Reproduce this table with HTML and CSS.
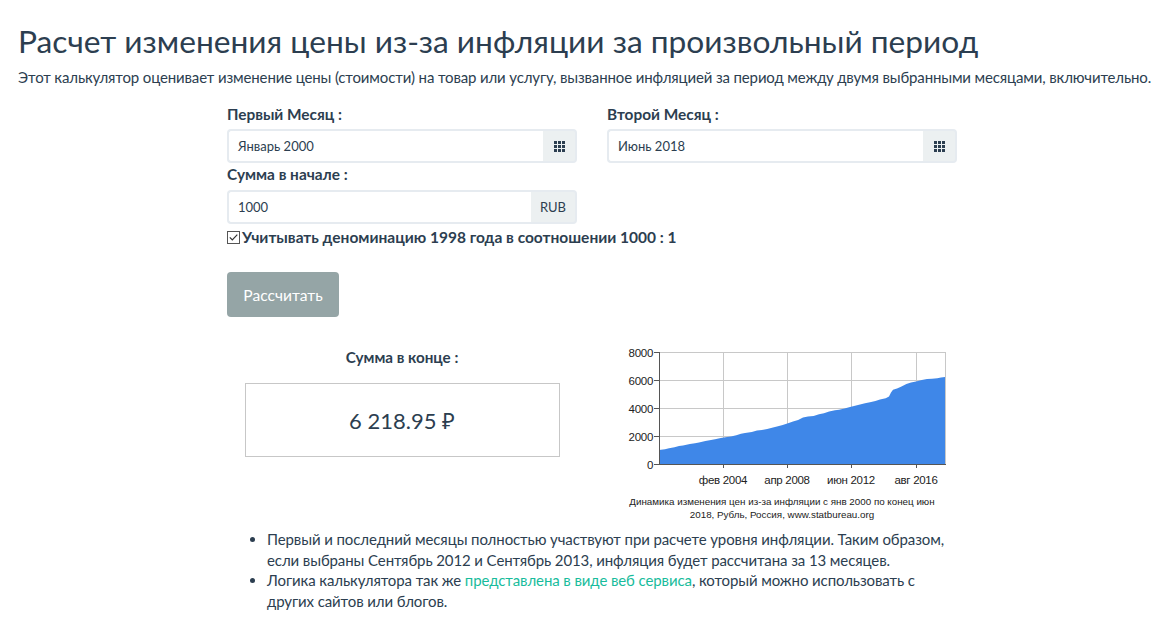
FILE: index.html
```html
<!DOCTYPE html>
<html lang="ru">
<head>
<meta charset="utf-8">
<title>Расчет изменения цены из-за инфляции</title>
<link rel="stylesheet" href="styles.css">
</head>
<body>
<h1 class="title">Расчет изменения цены из-за инфляции за произвольный период</h1>
<p class="lead">Этот калькулятор оценивает изменение цены (стоимости) на товар или услугу, вызванное инфляцией за период между двумя выбранными месяцами, включительно.</p>

<div class="calc">
  <div class="row">
    <div class="col">
      <label class="lbl">Первый Месяц :</label>
      <div class="igroup">
        <div class="field">Январь 2000</div>
        <div class="addon addon-icon">
          <svg width="11" height="11" viewBox="0 0 11 11"><g fill="#2c3e50"><rect x="0" y="0" width="3" height="3"/><rect x="4" y="0" width="3" height="3"/><rect x="8" y="0" width="3" height="3"/><rect x="0" y="4" width="3" height="3"/><rect x="4" y="4" width="3" height="3"/><rect x="8" y="4" width="3" height="3"/><rect x="0" y="8" width="3" height="3"/><rect x="4" y="8" width="3" height="3"/><rect x="8" y="8" width="3" height="3"/></g></svg>
        </div>
      </div>
    </div>
    <div class="col">
      <label class="lbl">Второй Месяц :</label>
      <div class="igroup">
        <div class="field">Июнь 2018</div>
        <div class="addon addon-icon">
          <svg width="11" height="11" viewBox="0 0 11 11"><g fill="#2c3e50"><rect x="0" y="0" width="3" height="3"/><rect x="4" y="0" width="3" height="3"/><rect x="8" y="0" width="3" height="3"/><rect x="0" y="4" width="3" height="3"/><rect x="4" y="4" width="3" height="3"/><rect x="8" y="4" width="3" height="3"/><rect x="0" y="8" width="3" height="3"/><rect x="4" y="8" width="3" height="3"/><rect x="8" y="8" width="3" height="3"/></g></svg>
        </div>
      </div>
    </div>
  </div>
  <div class="row">
    <div class="col">
      <label class="lbl lbl2">Сумма в начале :</label>
      <div class="igroup">
        <div class="field">1000</div>
        <div class="addon addon-text">RUB</div>
      </div>
    </div>
  </div>
  <div class="check">
    <span class="box"><svg width="13" height="13" viewBox="0 0 13 13"><rect x="0.5" y="0.5" width="12" height="12" fill="#fff" stroke="#555"/><path d="M2.8 6.4 L5.3 9 L10.3 3.6" fill="none" stroke="#333" stroke-width="1.2"/></svg></span>
    <span class="check-text">Учитывать деноминацию 1998 года в соотношении 1000 : 1</span>
  </div>
  <button class="btn">Рассчитать</button>

  <div class="row result-row">
    <div class="col result-col">
      <div class="res-lbl">Сумма в конце :</div>
      <div class="res-box">6 218.95 ₽</div>
    </div>
    <div class="col chart-col">
      <svg class="chart" width="350" height="150" viewBox="0 0 350 150">
        <g stroke="#c8c8c8" stroke-width="1">
          <line x1="52" y1="13.5" x2="339" y2="13.5"/>
          <line x1="52" y1="41.5" x2="339" y2="41.5"/>
          <line x1="52" y1="69.5" x2="339" y2="69.5"/>
          <line x1="52" y1="97.5" x2="339" y2="97.5"/>
          <line x1="116.5" y1="13" x2="116.5" y2="125"/>
          <line x1="180.5" y1="13" x2="180.5" y2="125"/>
          <line x1="244.5" y1="13" x2="244.5" y2="125"/>
          <line x1="309.5" y1="13" x2="309.5" y2="125"/>
          <line x1="338.5" y1="13" x2="338.5" y2="125"/>
        </g>
        <path fill="#3f87e8" d="M52 125 L52 111 L58 110.2 L62 109.2 L67.5 108.2 L72 107.1 L76 106.4 L82.9 105.1 L88 104.2 L92 103.4 L98.4 102 L104 101.1 L108 100.3 L113.8 99.1 L120 98 L124 97.4 L129.3 96.2 L134 94.8 L138 94.1 L144.8 92.9 L150 91.6 L155 91 L160.2 90 L166 88.6 L170 87.6 L175.7 86.1 L181 84.2 L186 82.6 L191.1 80.9 L196 78.6 L201 77.6 L206.6 77 L212 75.2 L217 74.3 L222.1 72.6 L228 71.2 L232 70.7 L237.5 69.4 L243 68 L248 66.8 L253 65.6 L258 64.3 L263 63.2 L268.4 61.9 L273 60.4 L278.7 59.2 L282 57.6 L284 53.4 L286 50.8 L290 49.6 L294 47.8 L299.4 45 L304 43.6 L309 42.4 L314.8 41 L320 40.1 L325 39.8 L330.3 39.2 L334 38.6 L338 37.9 L338 125 Z"/>
        <g stroke="#555" stroke-width="1">
          <line x1="52.5" y1="13" x2="52.5" y2="125.5"/>
          <line x1="52" y1="125.5" x2="339" y2="125.5"/>
          <line x1="47" y1="13.5" x2="52" y2="13.5"/>
          <line x1="47" y1="41.5" x2="52" y2="41.5"/>
          <line x1="47" y1="69.5" x2="52" y2="69.5"/>
          <line x1="47" y1="97.5" x2="52" y2="97.5"/>
          <line x1="47" y1="125.5" x2="52" y2="125.5"/>
          <line x1="116.5" y1="125" x2="116.5" y2="129"/>
          <line x1="180.5" y1="125" x2="180.5" y2="129"/>
          <line x1="244.5" y1="125" x2="244.5" y2="129"/>
          <line x1="309.5" y1="125" x2="309.5" y2="129"/>
        </g>
        <g class="ax" text-anchor="end">
          <text x="46" y="17.5">8000</text>
          <text x="46" y="45.5">6000</text>
          <text x="46" y="73.5">4000</text>
          <text x="46" y="101.5">2000</text>
          <text x="46" y="129.5">0</text>
        </g>
        <g class="ax" text-anchor="middle">
          <text x="116" y="145">фев 2004</text>
          <text x="180" y="145">апр 2008</text>
          <text x="244" y="145">июн 2012</text>
          <text x="309" y="145">авг 2016</text>
        </g>
      </svg>
      <div class="caption">Динамика изменения цен из-за инфляции с янв 2000 по конец июн<br>2018, Рубль, Россия, www.statbureau.org</div>
    </div>
  </div>

  <ul class="notes">
    <li>Первый и последний месяцы полностью участвуют при расчете уровня инфляции. Таким образом, если выбраны Сентябрь 2012 и Сентябрь 2013, инфляция будет рассчитана за 13 месяцев.</li>
    <li>Логика калькулятора так же <a href="#">представлена в виде веб сервиса</a>, который можно использовать с других сайтов или блогов.</li>
  </ul>
</div>
</body>
</html>
```

FILE: styles.css
```css
* { box-sizing: border-box; }
html, body { background: #fff; }
body {
  margin: 0;
  font-family: Lato, "Noto Sans", sans-serif;
  color: #2c3e50;
  font-size: 15px;
}
.title {
  margin: 21px 0 0 18px;
  font-size: 31.7px;
  font-weight: 400;
  line-height: 40px;
}
.lead {
  margin: 6px 0 0 18px;
  font-size: 15px;
  line-height: 20px;
  letter-spacing: -0.14px;
  white-space: nowrap;
}
.calc {
  margin: 17px 0 0 227px;
  width: 730px;
}
.row {
  display: flex;
  gap: 30px;
}
.col {
  width: 350px;
  display: flex;
  flex-direction: column;
}
.lbl {
  font-weight: 700;
  font-size: 15.4px;
  line-height: 20px;
  margin-bottom: 5px;
}
.lbl2 { margin-top: 1px; margin-bottom: 6px; }
.igroup {
  display: flex;
  height: 34px;
}
.field {
  flex: 1;
  border: 2px solid #e6ebf0;
  border-right: none;
  border-radius: 4px 0 0 4px;
  padding: 0 9px;
  font-size: 13px;
  line-height: 30px;
  color: #2c3e50;
}
.addon {
  background: #ecf0f1;
  border: 2px solid #e6ebf0;
  border-left: none;
  border-radius: 0 4px 4px 0;
  display: flex;
  align-items: center;
  justify-content: center;
}
.addon-icon { width: 34px; }
.addon-text { width: 46px; font-size: 13px; }
.check {
  display: flex;
  align-items: center;
  margin-top: 4px;
  height: 18px;
  font-weight: 700;
  font-size: 15.5px;
}
.box { display: flex; margin-right: 2px; }
.btn {
  display: block;
  margin-top: 26px;
  width: 112px;
  height: 45px;
  background: #95a5a6;
  color: #fff;
  border: none;
  border-radius: 4px;
  font-family: Lato, "Noto Sans", sans-serif;
  font-size: 15.6px;
  padding: 0;
}
.result-row { margin-top: 22px; }
.result-col { align-items: center; padding-top: 8px; }
.res-lbl {
  font-weight: 700;
  font-size: 15.2px;
  line-height: 20px;
}
.res-box {
  margin-top: 16px;
  width: 315px;
  height: 74px;
  border: 1px solid #c7c7c7;
  display: flex;
  align-items: center;
  justify-content: center;
  font-size: 22px;
  font-weight: 400;
}
.chart-col { align-items: center; }
.chart { display: block; }
.ax {
  font-family: "Liberation Sans", Arial, sans-serif;
  font-size: 11.5px;
  fill: #222;
  letter-spacing: -0.3px;
}
.caption {
  margin-top: 7px;
  font-family: "Liberation Sans", Arial, sans-serif;
  font-size: 9.8px;
  line-height: 12.5px;
  text-align: center;
  color: #222;
}
.notes {
  margin: 8px 0 0;
  padding-left: 40px;
  font-size: 15px;
  line-height: 20.6px;
  letter-spacing: -0.1px;
}
.notes a {
  color: #18bc9c;
  text-decoration: none;
}
```
